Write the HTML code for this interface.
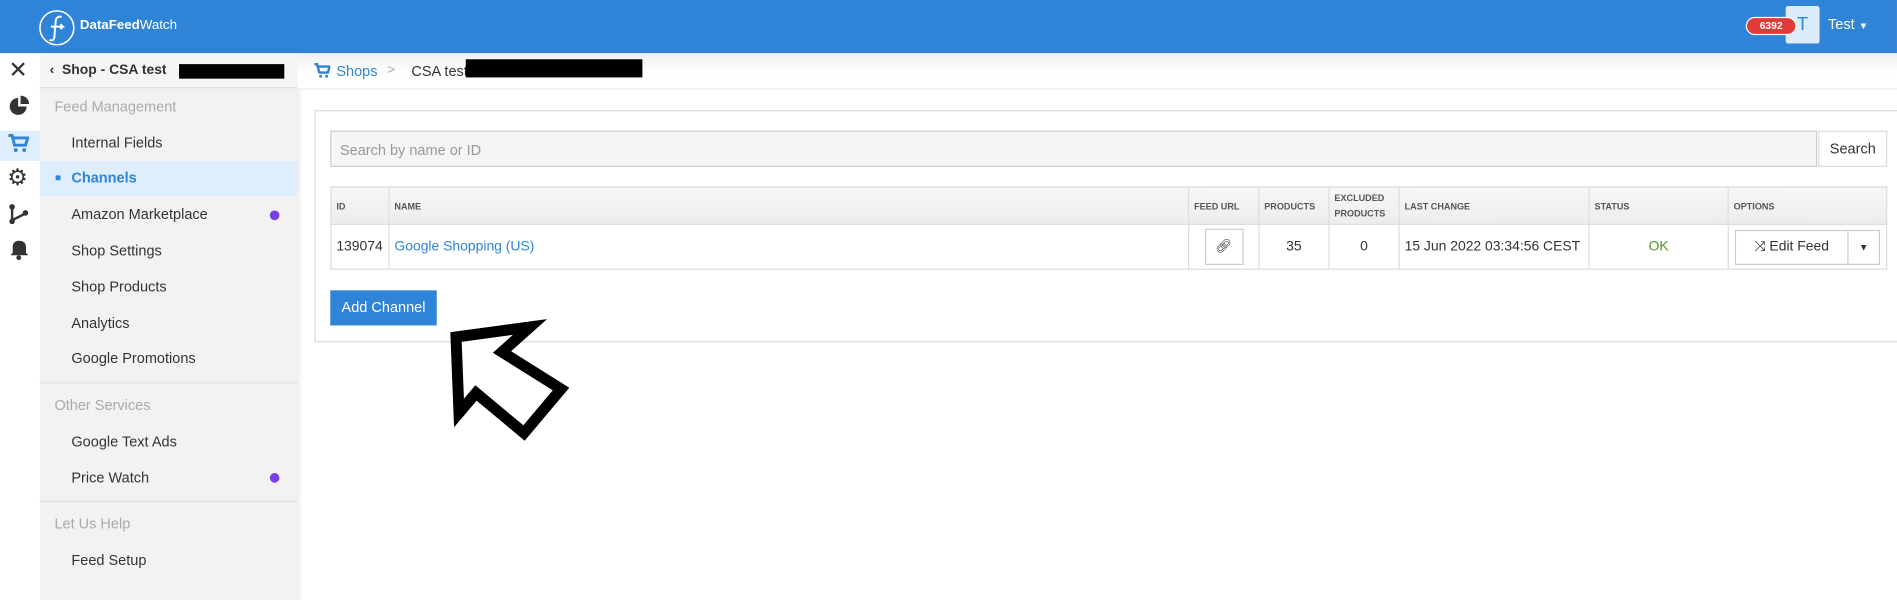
<!DOCTYPE html>
<html><head><meta charset="utf-8"><style>
*{box-sizing:border-box;margin:0;padding:0}
html,body{width:1897px;height:600px;overflow:hidden;background:#fff;font-family:"Liberation Sans",sans-serif}
#w{position:absolute;left:0;top:0;width:1568px;height:496px;transform:scale(1.2098);transform-origin:0 0;font-size:11.5px;color:#333}
.a{position:absolute}
.hdr{left:0;top:0;width:1568px;height:44px;background:#2f84d8}
.rail{left:0;top:44px;width:33px;height:452px;background:#fff}
.side{left:33px;top:44px;width:213px;height:452px;background:#f2f2f2;box-shadow:2px 0 3px rgba(0,0,0,.08)}
.it{position:absolute;left:26px;font-size:12px;color:#333}
.sec{position:absolute;left:12px;font-size:12px;color:#aaa}
.dot{position:absolute;left:190px;width:8px;height:8px;border-radius:50%;background:#7b3fe4}
.hr{position:absolute;left:0;width:213px;height:1px;background:#ddd}
table{border-collapse:collapse;position:absolute;left:273px;top:154px;width:1287px;font-size:11.5px;table-layout:fixed}
th{height:31px;background:linear-gradient(#f7f7f7,#ececec);border:1px solid #ddd;font-size:7.5px;color:#555;text-align:left;padding:0 4px;font-weight:bold}
td{height:37px;border:1px solid #ddd;padding:0 4px;white-space:nowrap}
</style></head><body><div id="w">
<div class="a hdr"></div>
<svg class="a" style="left:31px;top:7px" width="32" height="32" viewBox="0 0 32 32"><circle cx="16" cy="16" r="14" fill="none" stroke="#fff" stroke-width="1.3"/><path d="M20 7c-3-1-5 1-5 4l-1 12c0 3-2 4-4 3M11 15h10l-2-2M21 15l-2 2" stroke="#fff" stroke-width="1.6" fill="none"/></svg>
<div class="a" style="left:66px;top:15px;color:#fff;font-size:11px"><b>DataFeed</b>Watch</div>
<div class="a" style="left:1476px;top:5px;width:28px;height:31px;background:#dcebfa;border-radius:2px;color:#2f84d8;font-size:15px;text-align:center;line-height:31px">T</div>
<div class="a" style="left:1443px;top:14px;width:42px;height:15px;background:#e23a3a;border:1.5px solid #fff;border-radius:8px;color:#fff;font-size:8.5px;font-weight:bold;text-align:center;line-height:12px">6392</div>
<div class="a" style="left:1511px;top:13px;color:#fff;font-size:12px">Test <span style="font-size:8px">▼</span></div>
<div class="a rail"></div>
<div class="a" style="left:0;top:108px;width:33px;height:25px;background:#dfeefc"></div>
<div class="a" style="left:7px;top:47px;font-size:19px;color:#333">✕</div>
<svg class="a" style="left:7px;top:79px" width="17" height="17"><path d="M8 2a7 7 0 1 0 7 7H8z" fill="#333"/><path d="M10 0v7h7a7 7 0 0 0-7-7z" fill="#333"/></svg>
<svg class="a" style="left:6px;top:110px" width="18" height="17"><path d="M1 2h3l2 8h9l2-6H5" fill="none" stroke="#2f84d8" stroke-width="2.4"/><circle cx="7" cy="14" r="1.6" fill="#2f84d8"/><circle cx="14" cy="14" r="1.6" fill="#2f84d8"/></svg>
<div class="a" style="left:6px;top:136px;font-size:19px;color:#333">⚙</div>
<svg class="a" style="left:7px;top:168px" width="17" height="18"><path d="M3 2v12l10-5" fill="none" stroke="#333" stroke-width="2"/><circle cx="3" cy="3" r="2.3" fill="#333"/><circle cx="3" cy="15" r="2.3" fill="#333"/><circle cx="14" cy="8" r="2.3" fill="#333"/></svg>
<svg class="a" style="left:7px;top:198px" width="17" height="17"><path d="M8.5 1c-3 0-5 2-5 5v5l-2 2h15l-2-2V6c0-3-2-5-6-5z" fill="#333"/><circle cx="8.5" cy="15" r="2" fill="#333"/></svg>
<div class="a side">
<div style="position:absolute;left:0;top:0;width:213px;height:29px;background:#f5f5f5;border-bottom:1px solid #ddd"></div>
<div class="it" style="left:8px;top:8px;font-weight:bold;font-size:11.5px">‹&nbsp; Shop - CSA test</div>
<div style="position:absolute;left:115px;top:9px;width:87px;height:12px;background:#000"></div>
<div class="sec" style="top:37px">Feed Management</div>
<div class="it" style="top:67px">Internal Fields</div>
<div style="position:absolute;left:0;top:89px;width:213px;height:29px;background:#dfeefc"></div>
<div style="position:absolute;left:13px;top:101px;width:4px;height:4px;background:#2f84d8"></div>
<div class="it" style="top:96px;color:#2f84d8;font-weight:bold">Channels</div>
<div class="it" style="top:126px">Amazon Marketplace</div><div class="dot" style="top:130px"></div>
<div class="it" style="top:156px">Shop Settings</div>
<div class="it" style="top:186px">Shop Products</div>
<div class="it" style="top:216px">Analytics</div>
<div class="it" style="top:245px">Google Promotions</div>
<div class="hr" style="top:272px"></div>
<div class="sec" style="top:284px">Other Services</div>
<div class="it" style="top:314px">Google Text Ads</div>
<div class="it" style="top:344px">Price Watch</div><div class="dot" style="top:347px"></div>
<div class="hr" style="top:370px"></div>
<div class="sec" style="top:382px">Let Us Help</div>
<div class="it" style="top:412px">Feed Setup</div>
</div>
<div class="a" style="left:246px;top:44px;width:1322px;height:30px;background:linear-gradient(#f0f0f0,#fff 60%);border-bottom:1px solid #eee"></div>
<svg class="a" style="left:259px;top:52px" width="14" height="13"><path d="M1 1h2l2 7h7l1.5-5H4" fill="none" stroke="#2f84d8" stroke-width="2"/><circle cx="6" cy="11" r="1.2" fill="#2f84d8"/><circle cx="11" cy="11" r="1.2" fill="#2f84d8"/></svg>
<div class="a" style="left:278px;top:52px;color:#2f84d8;font-size:12px">Shops</div>
<div class="a" style="left:320px;top:52px;color:#aaa">&gt;</div>
<div class="a" style="left:340px;top:52px;font-size:12px">CSA test</div>
<div class="a" style="left:385px;top:49px;width:146px;height:15px;background:#000"></div>
<div class="a" style="left:260px;top:91px;width:1320px;height:192px;border:1px solid #ddd"></div>
<div class="a" style="left:273px;top:108px;width:1229px;height:30px;background:#f5f5f5;border:1px solid #ccc;color:#999;font-size:12px;padding:8px 7px">Search by name or ID</div>
<div class="a" style="left:1503px;top:108px;width:57px;height:30px;border:1px solid #ddd;background:#fff;font-size:12px;text-align:center;line-height:28px">Search</div>
<table><colgroup><col style="width:48px"><col><col style="width:58px"><col style="width:58px"><col style="width:58px"><col style="width:157px"><col style="width:115px"><col style="width:131px"></colgroup><tr><th>ID</th><th>NAME</th><th>FEED URL</th><th>PRODUCTS</th><th style="line-height:13px">EXCLUDED PRODUCTS</th><th>LAST CHANGE</th><th>STATUS</th><th>OPTIONS</th></tr>
<tr><td>139074</td><td style="color:#2f84d8">Google Shopping (US)</td><td style="text-align:center"><div style="display:inline-block;width:32px;height:30px;border:1px solid #ccc;line-height:28px;font-size:11px">🔗︎</div></td><td style="text-align:center">35</td><td style="text-align:center">0</td><td>15 Jun 2022 03:34:56 CEST</td><td style="text-align:center;color:#4a9a2a">OK</td><td style="padding:0 5px"><div style="width:120px;height:29px;border:1px solid #ccc;display:flex"><div style="flex:1;text-align:center;line-height:27px;border-right:1px solid #ccc">⤨ Edit Feed</div><div style="width:25px;text-align:center;line-height:27px;font-size:8px">▼</div></div></td></tr></table>
<div class="a" style="left:273px;top:240px;width:88px;height:29px;background:#2f84d8;color:#fff;font-size:12px;text-align:center;line-height:29px">Add Channel</div>
</div>
<svg class="a" style="position:absolute;left:0;top:0" width="1897" height="600"><polygon points="456,337 530,327 502,352 561,389 524,433 476,393 459,413" fill="#fff" stroke="#000" stroke-width="11" stroke-linejoin="miter"/></svg>
</body></html>
